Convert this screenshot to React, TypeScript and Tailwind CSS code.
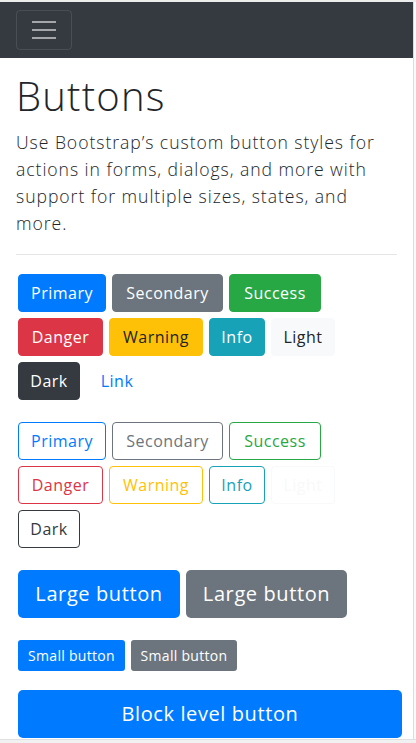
import React from 'react'

type Variant = 'primary' | 'secondary' | 'success' | 'danger' | 'warning' | 'info' | 'light' | 'dark' | 'link'

const solid: Record<Variant, string> = {
  primary: 'bg-[#007bff] border-[#007bff] text-white',
  secondary: 'bg-[#6c757d] border-[#6c757d] text-white',
  success: 'bg-[#28a745] border-[#28a745] text-white',
  danger: 'bg-[#dc3545] border-[#dc3545] text-white',
  warning: 'bg-[#ffc107] border-[#ffc107] text-[#212529]',
  info: 'bg-[#17a2b8] border-[#17a2b8] text-white',
  light: 'bg-[#f8f9fa] border-[#f8f9fa] text-[#212529]',
  dark: 'bg-[#343a40] border-[#343a40] text-white',
  link: 'bg-transparent border-transparent text-[#007bff]'
}

const outline: Record<Variant, string> = {
  primary: 'border-[#007bff] text-[#007bff]',
  secondary: 'border-[#6c757d] text-[#6c757d]',
  success: 'border-[#28a745] text-[#28a745]',
  danger: 'border-[#dc3545] text-[#dc3545]',
  warning: 'border-[#ffc107] text-[#ffc107]',
  info: 'border-[#17a2b8] text-[#17a2b8]',
  light: 'border-[#f8f9fa] text-[#f8f9fa]',
  dark: 'border-[#343a40] text-[#343a40]',
  link: 'border-transparent text-[#007bff]'
}

const rows: { label: string; v: Variant; w: string }[][] = [
  [
    { label: 'Primary', v: 'primary', w: 'w-[88px]' },
    { label: 'Secondary', v: 'secondary', w: 'w-[111px]' },
    { label: 'Success', v: 'success', w: 'w-[92px]' }
  ],
  [
    { label: 'Danger', v: 'danger', w: 'w-[85px]' },
    { label: 'Warning', v: 'warning', w: 'w-[94px]' },
    { label: 'Info', v: 'info', w: 'w-[56px]' },
    { label: 'Light', v: 'light', w: 'w-[64px]' }
  ],
  [
    { label: 'Dark', v: 'dark', w: 'w-[62px]' },
    { label: 'Link', v: 'link', w: 'w-[62px]' }
  ]
]

function Btn({ label, cls, w }: { label: string; cls: string; w: string }) {
  return (
    <button
      className={`${w} h-[38px] rounded-[4px] border text-[16px] leading-none font-medium tracking-[0.5px] whitespace-nowrap ${cls}`}
    >
      {label}
    </button>
  )
}

export default function App() {
  return (
    <div
      className="flex h-[743px] w-[416px] flex-col overflow-hidden bg-white text-[#212529]"
      style={{ fontFamily: '"Open Sans", "Noto Sans", sans-serif' }}
    >
      <div className="h-[2px] w-full bg-[#ececec]" />
      <div className="flex min-h-0 flex-1 overflow-hidden">
        <div className="flex w-[413px] flex-col">
          <nav className="flex h-[56px] shrink-0 items-center bg-[#343a40] px-4">
            <button className="flex h-[40px] w-[56px] flex-col items-center justify-center gap-[6px] rounded-[4px] border border-white/10">
              <span className="block h-[2px] w-[24px] bg-white/55" />
              <span className="block h-[2px] w-[24px] bg-white/55" />
              <span className="block h-[2px] w-[24px] bg-white/55" />
            </button>
          </nav>

          <main className="flex flex-col px-4">
            <h1 className="mt-[14px] text-[40px] leading-[48px] font-light tracking-[1.2px]">Buttons</h1>
            <p className="mt-[9px] text-[17.6px] leading-[27px] font-light tracking-[0.95px]">
              Use Bootstrap’s custom button styles for actions in forms, dialogs, and more with support for multiple
              sizes, states, and more.
            </p>
            <hr className="mt-[17px] border-t border-[#e5e5e5]" />

            <div className="mt-[19px] flex flex-col gap-[6px] pl-[2px]">
              {rows.map((r, i) => (
                <div key={i} className="flex gap-[6px]">
                  {r.map((b) => (
                    <Btn key={b.label} label={b.label} cls={solid[b.v]} w={b.w} />
                  ))}
                </div>
              ))}
            </div>

            <div className="mt-[22px] flex flex-col gap-[6px] pl-[2px]">
              {rows.map((r, i) => (
                <div key={i} className="flex gap-[6px]">
                  {r
                    .filter((b) => b.v !== 'link')
                    .map((b) => (
                      <Btn key={b.label} label={b.label} cls={`bg-transparent ${outline[b.v]}`} w={b.w} />
                    ))}
                </div>
              ))}
            </div>

            <div className="mt-[22px] flex gap-[6px] pl-[2px]">
              <button className="h-[48px] w-[162px] rounded-[5px] bg-[#007bff] text-[20px] font-medium tracking-[0.6px] text-white">
                Large button
              </button>
              <button className="h-[48px] w-[161px] rounded-[5px] bg-[#6c757d] text-[20px] font-medium tracking-[0.6px] text-white">
                Large button
              </button>
            </div>

            <div className="mt-[22px] flex gap-[6px] pl-[2px]">
              <button className="h-[31px] w-[107px] rounded-[3px] bg-[#007bff] text-[14px] font-medium tracking-[0.3px] text-white">
                Small button
              </button>
              <button className="h-[31px] w-[106px] rounded-[3px] bg-[#6c757d] text-[14px] font-medium tracking-[0.3px] text-white">
                Small button
              </button>
            </div>

            <div className="mt-[19px] pl-[2px]">
              <button className="h-[48px] w-[384px] rounded-[5px] bg-[#007bff] text-[20px] font-medium tracking-[0.6px] text-white">
                Block level button
              </button>
            </div>
          </main>
        </div>
        <div className="w-[3px] border-l border-[#dcdcdc] bg-[#fafafa]" />
      </div>
      <div className="h-[4px] w-full shrink-0 border-t border-[#e0e0e0] bg-[#f1f1f1]" />
    </div>
  )
}
